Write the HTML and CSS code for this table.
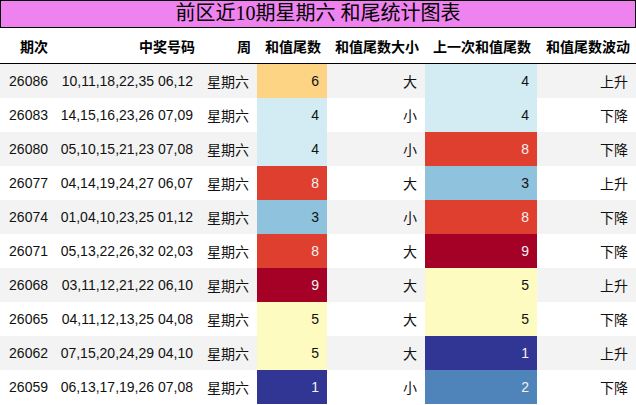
FILE: index.html
```html
<!DOCTYPE html>
<html lang="zh">
<head>
<meta charset="utf-8">
<title>前区近10期星期六 和尾统计图表</title>
<link rel="stylesheet" href="styles.css">
</head>
<body>
<div class="chart">
  <div class="caption">前区近10期星期六 和尾统计图表</div>
  <div class="row head">
    <div class="c">期次</div>
    <div class="c">中奖号码</div>
    <div class="c">周</div>
    <div class="c">和值尾数</div>
    <div class="c">和值尾数大小</div>
    <div class="c">上一次和值尾数</div>
    <div class="c">和值尾数波动</div>
  </div>
  <div class="row odd">
    <div class="c">26086</div><div class="c">10,11,18,22,35 06,12</div><div class="c">星期六</div>
    <div class="c v6">6</div><div class="c">大</div><div class="c v4">4</div><div class="c">上升</div>
  </div>
  <div class="row">
    <div class="c">26083</div><div class="c">14,15,16,23,26 07,09</div><div class="c">星期六</div>
    <div class="c v4">4</div><div class="c">小</div><div class="c v4">4</div><div class="c">下降</div>
  </div>
  <div class="row odd">
    <div class="c">26080</div><div class="c">05,10,15,21,23 07,08</div><div class="c">星期六</div>
    <div class="c v4">4</div><div class="c">小</div><div class="c v8">8</div><div class="c">下降</div>
  </div>
  <div class="row">
    <div class="c">26077</div><div class="c">04,14,19,24,27 06,07</div><div class="c">星期六</div>
    <div class="c v8">8</div><div class="c">大</div><div class="c v3">3</div><div class="c">上升</div>
  </div>
  <div class="row odd">
    <div class="c">26074</div><div class="c">01,04,10,23,25 01,12</div><div class="c">星期六</div>
    <div class="c v3">3</div><div class="c">小</div><div class="c v8">8</div><div class="c">下降</div>
  </div>
  <div class="row">
    <div class="c">26071</div><div class="c">05,13,22,26,32 02,03</div><div class="c">星期六</div>
    <div class="c v8">8</div><div class="c">大</div><div class="c v9">9</div><div class="c">下降</div>
  </div>
  <div class="row odd">
    <div class="c">26068</div><div class="c">03,11,12,21,22 06,10</div><div class="c">星期六</div>
    <div class="c v9">9</div><div class="c">大</div><div class="c v5">5</div><div class="c">上升</div>
  </div>
  <div class="row">
    <div class="c">26065</div><div class="c">04,11,12,13,25 04,08</div><div class="c">星期六</div>
    <div class="c v5">5</div><div class="c">大</div><div class="c v5">5</div><div class="c">下降</div>
  </div>
  <div class="row odd">
    <div class="c">26062</div><div class="c">07,15,20,24,29 04,10</div><div class="c">星期六</div>
    <div class="c v5">5</div><div class="c">大</div><div class="c v1">1</div><div class="c">上升</div>
  </div>
  <div class="row">
    <div class="c">26059</div><div class="c">06,13,17,19,26 07,08</div><div class="c">星期六</div>
    <div class="c v1">1</div><div class="c">小</div><div class="c v2">2</div><div class="c">下降</div>
  </div>
</div>
</body>
</html>
```
FILE: styles.css
```css
html, body {
  margin: 0;
  padding: 0;
  background: #ffffff;
}
.chart {
  width: 636px;
  font-family: "Liberation Sans", "Noto Sans CJK SC", sans-serif;
  font-size: 14px;
  color: #111;
}
.caption {
  box-sizing: border-box;
  height: 28px;
  border: 1px solid #000;
  background: #ee82ee;
  text-align: center;
  font-family: "Liberation Serif", "Noto Sans CJK SC", serif;
  font-size: 20px;
  line-height: 25px;
  color: #000;
}
.row {
  display: grid;
  grid-template-columns: 56px 145px 56px 70px 98px 112px 99px;
  height: 34px;
}
.row.odd {
  background: #f3f3f3;
}
.row.head {
  height: 35px;
  border-bottom: 1px solid #000;
  font-weight: bold;
  color: #000;
}
.row.head .c {
  padding-right: 6px;
}
.c {
  display: flex;
  align-items: center;
  justify-content: flex-end;
  padding: 0 8px;
  white-space: nowrap;
  overflow: visible;
}
.row.head .c:first-child {
  padding-right: 8px;
}
.v1 { background: #313695; color: #f1f1f1; }
.v2 { background: #4f84bb; color: #f1f1f1; }
.v3 { background: #8fc3dd; color: #111; }
.v4 { background: #d3ebf2; color: #111; }
.v5 { background: #fefbc0; color: #111; }
.v6 { background: #fdd384; color: #111; }
.v8 { background: #de3f2e; color: #f1f1f1; }
.v9 { background: #a50026; color: #f1f1f1; }
```
